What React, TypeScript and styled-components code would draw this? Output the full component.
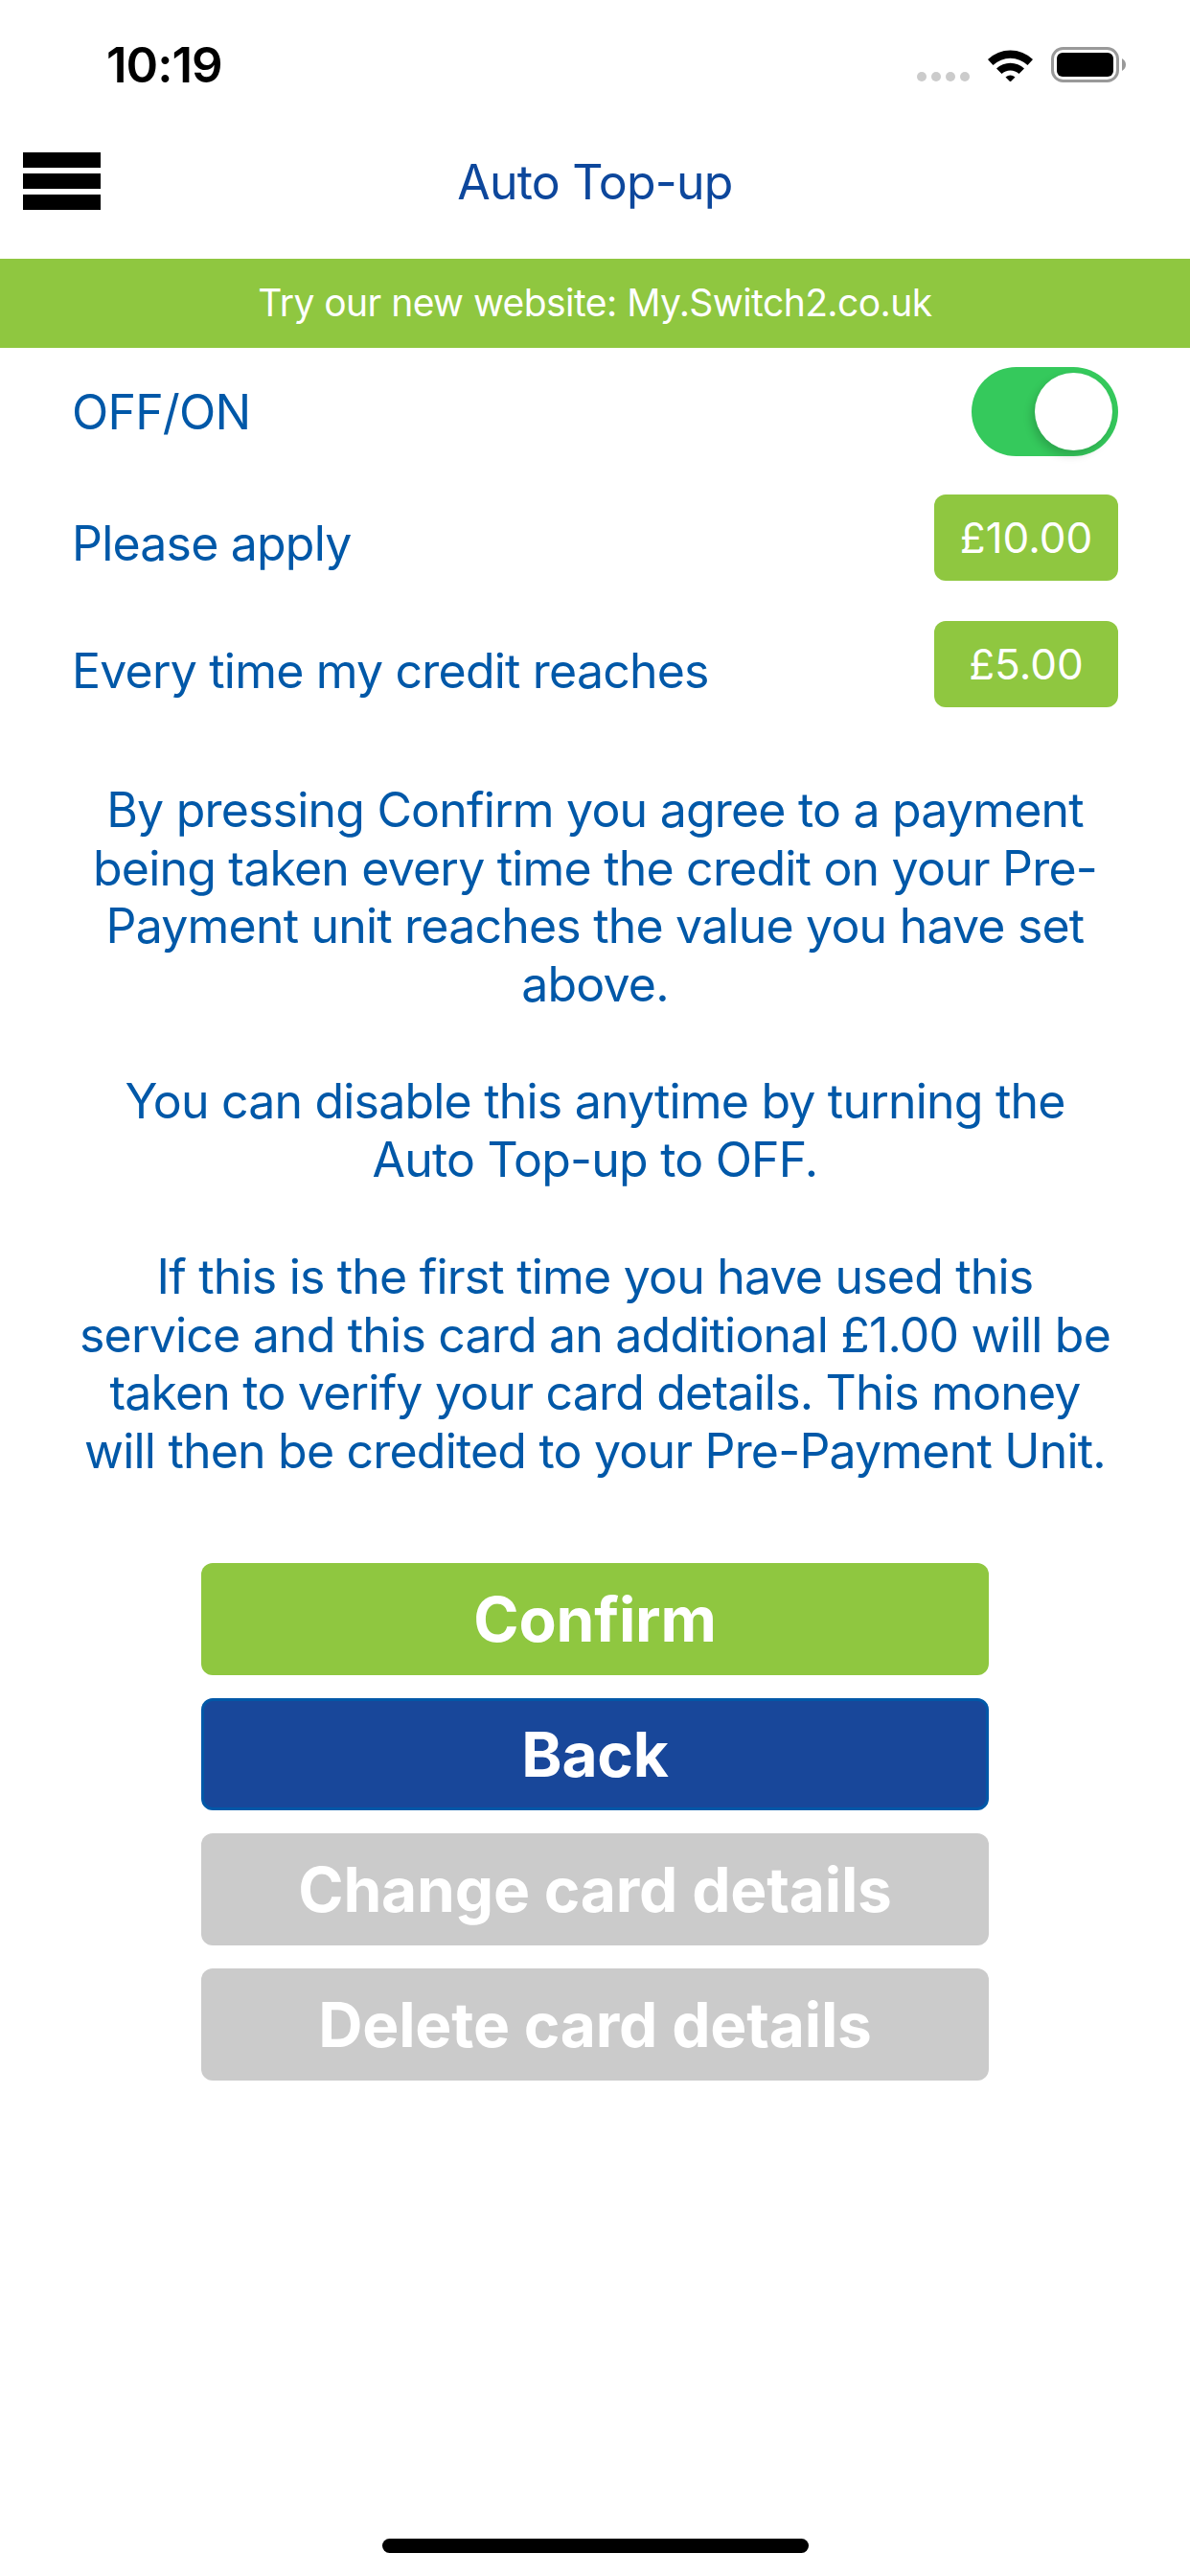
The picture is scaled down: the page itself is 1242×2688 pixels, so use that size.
import React from "react";
import styled, { createGlobalStyle } from "styled-components";

const GlobalStyle = createGlobalStyle`
  html, body {
    margin: 0;
    padding: 0;
    background: #fff;
  }
  body {
    font-family: Inter, "Liberation Sans", sans-serif;
  }
`;

const Page = styled.div`
  width: 1242px;
  height: 2688px;
  display: flex;
  flex-direction: column;
  background: #fff;
  overflow: hidden;
`;

const StatusBar = styled.div`
  height: 132px;
  box-sizing: border-box;
  padding: 42px 65px 0 111px;
  display: flex;
  justify-content: space-between;
  align-items: flex-start;
`;

const Clock = styled.div`
  font-size: 51px;
  font-weight: 600;
  line-height: 52px;
  letter-spacing: -1px;
  color: #000;
`;

const StatusIcons = styled.div`
  display: flex;
  align-items: flex-start;
  margin-top: 7px;
`;

const SignalDots = styled.div`
  display: flex;
  gap: 5px;
  margin: 26px 19px 0 0;
`;

const Dot = styled.span`
  width: 10px;
  height: 10px;
  border-radius: 5px;
  background: #cbcbcb;
`;

const NavBar = styled.div`
  height: 138px;
  box-sizing: border-box;
  padding-bottom: 22px;
  position: relative;
  display: flex;
  align-items: center;
  justify-content: center;
`;

const Burger = styled.div`
  position: absolute;
  left: 24px;
  top: 27px;
  width: 81px;
  display: flex;
  flex-direction: column;
  gap: 6px;
`;

const BurgerBar = styled.span`
  height: 16px;
  background: #000;
`;

const Title = styled.div`
  font-size: 50px;
  letter-spacing: -0.8px;
  color: #0d479c;
`;

const Banner = styled.div`
  height: 93px;
  box-sizing: border-box;
  padding-bottom: 2px;
  background: #8fc740;
  color: #fff;
  font-size: 39px;
  letter-spacing: -0.55px;
  display: flex;
  align-items: center;
  justify-content: center;
`;

const Settings = styled.div`
  padding: 20px 75px 0 75px;
  display: flex;
  flex-direction: column;
`;

const Row = styled.div<{ $height: number; $gap?: number }>`
  height: ${(p) => p.$height}px;
  margin-top: ${(p) => p.$gap ?? 0}px;
  display: flex;
  align-items: center;
  justify-content: space-between;
`;

const Label = styled.div<{ $drop?: number }>`
  font-size: 50px;
  letter-spacing: -0.8px;
  color: #0058a8;
  padding-top: ${(p) => p.$drop ?? 0}px;
`;

const Toggle = styled.div`
  width: 153px;
  height: 93px;
  border-radius: 47px;
  background: #35c95c;
  position: relative;
`;

const Knob = styled.span`
  position: absolute;
  right: 6px;
  top: 6px;
  width: 81px;
  height: 81px;
  border-radius: 50%;
  background: #fff;
  box-shadow: -3px 5px 10px rgba(0, 0, 0, 0.18);
`;

const Amount = styled.div`
  width: 192px;
  height: 90px;
  border-radius: 12px;
  background: #8fc740;
  color: #fff;
  font-size: 44px;
  display: flex;
  align-items: center;
  justify-content: center;
`;

const Notice = styled.div`
  margin-top: 77px;
  display: flex;
  flex-direction: column;
  gap: 62px;
`;

const Paragraph = styled.p`
  margin: 0;
  font-size: 50px;
  letter-spacing: -0.8px;
  line-height: 60.5px;
  color: #0058a8;
  text-align: center;
  white-space: nowrap;
`;

const Actions = styled.div`
  margin-top: 87px;
  display: flex;
  flex-direction: column;
  align-items: center;
  gap: 24px;
`;

const ActionButton = styled.button<{ $bg: string; $edge?: string }>`
  width: 822px;
  height: 117px;
  box-sizing: border-box;
  border: ${(p) => (p.$edge ? `3px solid ${p.$edge}` : "none")};
  border-radius: 12px;
  background: ${(p) => p.$bg};
  color: #fff;
  font-family: inherit;
  font-size: 64px;
  letter-spacing: -0.2px;
  font-weight: 700;
  padding: 0;
`;

const HomeIndicator = styled.div`
  width: 445px;
  height: 15px;
  border-radius: 8px;
  background: #000;
  margin: auto auto 24px;
`;

const App: React.FC = () => {
  return (
    <Page>
      <GlobalStyle />
      <StatusBar>
        <Clock>10:19</Clock>
        <StatusIcons>
          <SignalDots>
            <Dot />
            <Dot />
            <Dot />
            <Dot />
          </SignalDots>
          <svg width="47" height="36" viewBox="0 0 47 36" style={{ marginRight: 19 }}>
            <path d="M0 13 A34 34 0 0 1 47 13 L41.5 19 A26 26 0 0 0 5.5 19 Z" fill="#000" />
            <path d="M9 22.5 A21 21 0 0 1 38 22.5 L32.5 28 A13 13 0 0 0 14.5 28 Z" fill="#000" />
            <path d="M18.5 31.5 A8 8 0 0 1 28.5 31.5 L23.5 36.5 Z" fill="#000" />
          </svg>
          <svg width="80" height="38" viewBox="0 0 80 38">
            <rect x="1.5" y="1.5" width="68" height="34" rx="11" fill="none" stroke="#999" strokeWidth="3" />
            <rect x="6" y="6" width="59" height="25" rx="6" fill="#000" />
            <path d="M74 12 C77 14 78 16 78 18.5 C78 21 77 23 74 25 Z" fill="#999" />
          </svg>
        </StatusIcons>
      </StatusBar>
      <NavBar>
        <Burger>
          <BurgerBar />
          <BurgerBar />
          <BurgerBar />
        </Burger>
        <Title>Auto Top-up</Title>
      </NavBar>
      <Banner>Try our new website: My.Switch2.co.uk</Banner>
      <Settings>
        <Row $height={93}>
          <Label>OFF/ON</Label>
          <Toggle>
            <Knob />
          </Toggle>
        </Row>
        <Row $height={90} $gap={40}>
          <Label $drop={12}>Please apply</Label>
          <Amount>£10.00</Amount>
        </Row>
        <Row $height={90} $gap={42}>
          <Label $drop={14}>Every time my credit reaches</Label>
          <Amount>£5.00</Amount>
        </Row>
        <Notice>
          <Paragraph>
            By pressing Confirm you agree to a payment
            <br />
            being taken every time the credit on your Pre-
            <br />
            Payment unit reaches the value you have set
            <br />
            above.
          </Paragraph>
          <Paragraph>
            You can disable this anytime by turning the
            <br />
            Auto Top-up to OFF.
          </Paragraph>
          <Paragraph>
            If this is the first time you have used this
            <br />
            service and this card an additional £1.00 will be
            <br />
            taken to verify your card details. This money
            <br />
            will then be credited to your Pre-Payment Unit.
          </Paragraph>
        </Notice>
      </Settings>
      <Actions>
        <ActionButton $bg="#8fc740">Confirm</ActionButton>
        <ActionButton $bg="#18479a" $edge="#0058a8">Back</ActionButton>
        <ActionButton $bg="#cbcbcb">Change card details</ActionButton>
        <ActionButton $bg="#cbcbcb">Delete card details</ActionButton>
      </Actions>
      <HomeIndicator />
    </Page>
  );
};

export default App;
